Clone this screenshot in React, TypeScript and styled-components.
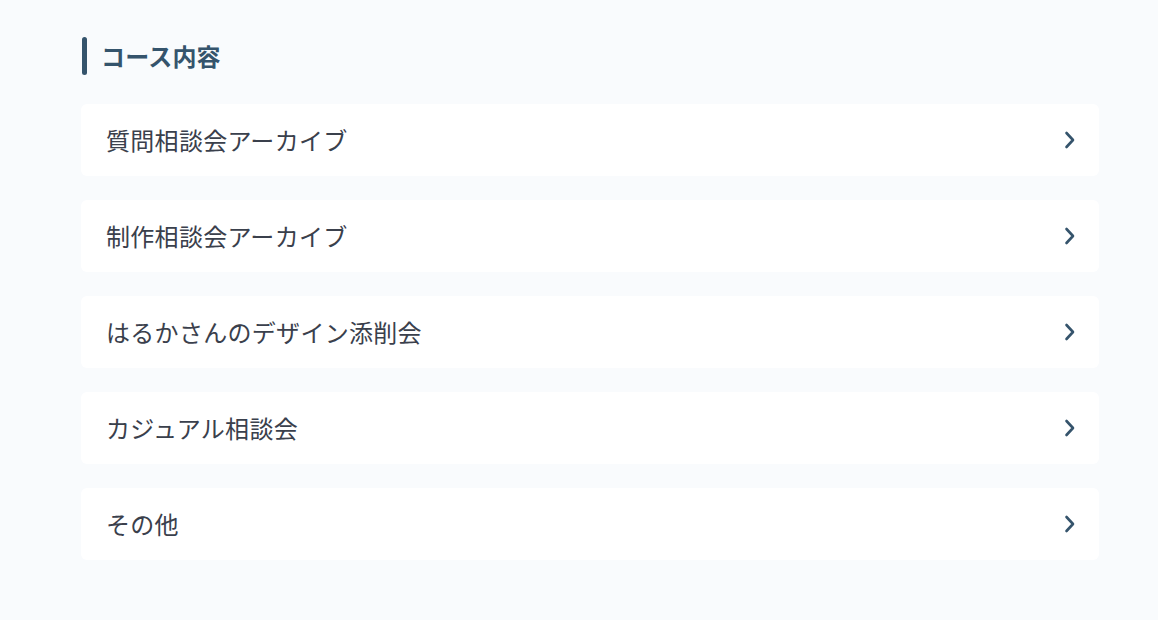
import styled, { createGlobalStyle } from 'styled-components';

const GlobalStyle = createGlobalStyle`
  html, body {
    margin: 0;
    padding: 0;
    background: #f9fbfd;
    font-family: 'Noto Sans CJK JP', 'Noto Sans', sans-serif;
  }
`;

const items = [
  '質問相談会アーカイブ',
  '制作相談会アーカイブ',
  'はるかさんのデザイン添削会',
  'カジュアル相談会',
  'その他',
];

function Chevron() {
  return (
    <svg width="12" height="18" viewBox="0 0 12 18" fill="none">
      <polyline points="2.5,2 9,9 2.5,16" stroke="#35546c" strokeWidth="2.6" strokeLinecap="round" strokeLinejoin="round" />
    </svg>
  );
}

export default function App() {
  return (
    <>
      <GlobalStyle />
      <Page>
        <Heading>コース内容</Heading>
        <List>
          {items.map((label) => (
            <Card key={label}>
              <Label>{label}</Label>
              <Chevron />
            </Card>
          ))}
        </List>
      </Page>
    </>
  );
}

const Page = styled.div`
  width: 1018px;
  padding: 37px 0 60px 81px;
`;

const Heading = styled.h2`
  position: relative;
  margin: 0 0 29px 0;
  height: 38px;
  display: flex;
  align-items: center;
  padding-left: 20px;
  font-size: 24px;
  font-weight: 700;
  line-height: 1;
  letter-spacing: 0.2px;
  color: #35546c;
  &::before {
    content: '';
    position: absolute;
    left: 1px;
    top: 0;
    bottom: 0;
    width: 5px;
    border-radius: 3px;
    background: #35546c;
  }
`;

const List = styled.div`
  display: flex;
  flex-direction: column;
  gap: 24px;
`;

const Card = styled.div`
  height: 72px;
  background: #ffffff;
  border-radius: 6px;
  display: flex;
  align-items: center;
  justify-content: space-between;
  padding: 0 23px 0 25px;
`;

const Label = styled.span`
  font-size: 24px;
  font-weight: 400;
  line-height: 1;
  letter-spacing: 0.3px;
  color: #3a404c;
`;
